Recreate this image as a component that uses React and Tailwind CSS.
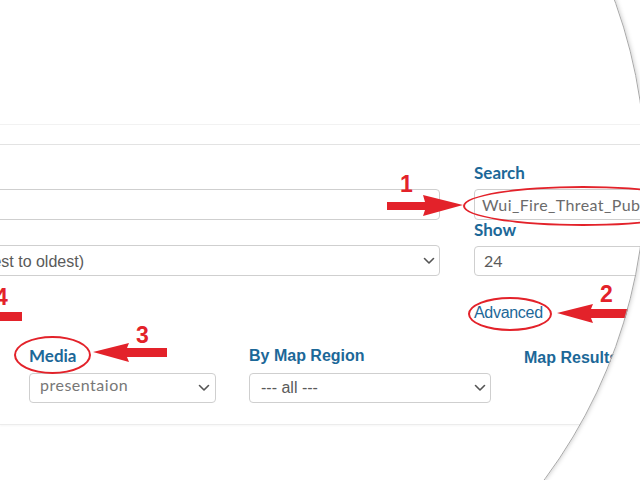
import React from "react";

const Chevron = () => (
  <svg width="12" height="8" viewBox="0 0 12 8" className="shrink-0">
    <polyline points="1.5,1.5 6,6 10.5,1.5" fill="none" stroke="#555" strokeWidth="1.6" strokeLinecap="round" strokeLinejoin="round" />
  </svg>
);

const ArrowRight = ({ className }) => (
  <svg className={className} width="78" height="24" viewBox="0 0 78 24">
    <path d="M0 8 H38 L36 1 L76 11 L36 22 L38 16 H0 Z" fill="#e3222a" />
  </svg>
);

const ArrowLeft = ({ className, w }) => (
  <svg className={className} width={w} height="22" viewBox={`0 0 ${w} 22`}>
    <path d={`M0 10 L36 1 L34 6 H${w} V15 H34 L36 20 Z`} fill="#e3222a" />
  </svg>
);

export default function App() {
  return (
    <div className="relative w-[640px] h-[480px] overflow-hidden bg-white">
      <div className="absolute inset-0 [clip-path:circle(510px_at_136px_175px)] bg-white">
        <div className="h-[125px] border-b border-[#f2f2f2]" />
        <div className="mt-[19px] border-t border-[#e3e3e3] border-b border-b-[#ececec] shadow-[0_1px_2px_rgba(0,0,0,0.04)] pt-[18px] pb-[21px]">
          <div className="flex">
            <div className="ml-[-60px] w-[500px] shrink-0 pt-[26px] flex flex-col gap-[25px]">
              <div className="h-[31px] rounded-[4px] border border-[#cfcfcf]" />
              <div className="h-[31px] rounded-[4px] border border-[#cfcfcf] flex items-center justify-end pr-[4px] relative">
                <span className="absolute right-[355px] top-[4px] text-[16px] text-[#5a5a5a] font-['Liberation_Sans',sans-serif] whitespace-nowrap">est to oldest)</span>
                <Chevron />
              </div>
            </div>
            <div className="ml-[34px] w-[240px] shrink-0 flex flex-col">
              <div className="h-[20px] leading-[20px] text-[17px] font-bold text-[#1c6898] font-['Lato',sans-serif]">Search</div>
              <div className="mt-[6px] h-[31px] rounded-[4px] border border-[#cfcfcf] flex items-center pl-[7px] text-[16px] text-[#6b6b6b] tracking-[0.4px] font-['Lato',sans-serif] whitespace-nowrap">
                Wui_Fire_Threat_Public
              </div>
              <div className="h-[20px] leading-[20px] text-[17px] font-bold text-[#1c6898] font-['Lato',sans-serif]">Show</div>
              <div className="mt-[6px] h-[30px] rounded-[4px] border border-[#cfcfcf] flex items-center pl-[9px] text-[16px] text-[#5a5a5a] font-['Lato',sans-serif]">
                24
              </div>
              <div className="mt-[27px] h-[20px] leading-[20px] text-[16px] text-[#1c6898] font-['Liberation_Sans',sans-serif] tracking-[-0.3px]">Advanced</div>
            </div>
          </div>
          <div className="flex mt-[23px] pl-[29px]">
            <div className="w-[187px] shrink-0 flex flex-col">
              <div className="h-[20px] leading-[20px] text-[17px] font-bold text-[#1c6898] font-['Lato',sans-serif]">Media</div>
              <div className="mt-[7px] h-[30px] rounded-[4px] border border-[#cfcfcf] flex items-center justify-between pl-[10px] pr-[5px]">
                <span className="text-[16px] text-[#777] font-['Lato',sans-serif] -mt-[6px] tracking-[0.5px]">presentaion</span>
                <Chevron />
              </div>
            </div>
            <div className="ml-[33px] w-[242px] shrink-0 flex flex-col">
              <div className="h-[20px] leading-[20px] text-[16px] font-bold text-[#1c6898] font-['Liberation_Sans',sans-serif]">By Map Region</div>
              <div className="mt-[7px] h-[30px] rounded-[4px] border border-[#cfcfcf] flex items-center justify-between pl-[11px] pr-[4px]">
                <span className="text-[16px] text-[#5a5a5a] font-['Liberation_Sans',sans-serif]">--- all ---</span>
                <Chevron />
              </div>
            </div>
            <div className="ml-[33px] mt-[2px] h-[20px] leading-[20px] text-[16px] font-bold text-[#1c6898] font-['Liberation_Sans',sans-serif] whitespace-nowrap">Map Results</div>
          </div>
        </div>

        {/* annotations */}
        <div className="absolute left-[463px] top-[186px] w-[240px] h-[40px] rounded-[50%] border-[2.5px] border-[#e3222a]" />
        <div className="absolute left-[468px] top-[297px] w-[84px] h-[34px] rounded-[50%] border-[2.5px] border-[#e3222a]" />
        <div className="absolute left-[14px] top-[336px] w-[77px] h-[38px] rounded-[50%] border-[2.5px] border-[#e3222a]" />

        <ArrowRight className="absolute left-[387px] top-[194px]" />
        <ArrowLeft className="absolute left-[557px] top-[303px]" w={85} />
        <ArrowLeft className="absolute left-[93px] top-[342px]" w={74} />
        <div className="absolute left-[-10px] top-[312px] w-[32px] h-[9px] bg-[#e3222a]" />

        <div className="absolute left-[400px] top-[171px] text-[23px] leading-[26px] font-bold text-[#e3222a] font-['Liberation_Sans',sans-serif]">1</div>
        <div className="absolute left-[600px] top-[281px] text-[23px] leading-[26px] font-bold text-[#e3222a] font-['Liberation_Sans',sans-serif]">2</div>
        <div className="absolute left-[136px] top-[322px] text-[23px] leading-[26px] font-bold text-[#e3222a] font-['Liberation_Sans',sans-serif]">3</div>
        <div className="absolute left-[-5px] top-[284px] text-[23px] leading-[26px] font-bold text-[#e3222a] font-['Liberation_Sans',sans-serif]">4</div>
      </div>
      <div className="absolute left-[-374px] top-[-335px] w-[1020px] h-[1020px] rounded-full border border-[#a8a8a8] shadow-[0_0_5px_rgba(0,0,0,0.25)] pointer-events-none" />
    </div>
  );
}
